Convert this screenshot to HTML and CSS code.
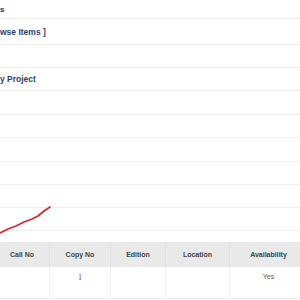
FILE: index.html
```html
<!DOCTYPE html>
<html>
<head>
<meta charset="utf-8">
<link rel="stylesheet" href="styles.css">
</head>
<body>
<div class="page">
  <div class="row r1"><span class="title">s</span></div>
  <div class="row r2"><span class="link">wse Items ]</span></div>
  <div class="row r3"></div>
  <div class="row r4"><span class="link">y Project</span></div>
  <div class="chart">
    <svg width="300" height="150" viewBox="0 0 300 150">
      <g stroke="#efefef" stroke-width="1">
        <line x1="0" y1="23.5" x2="300" y2="23.5"/>
        <line x1="0" y1="46.5" x2="300" y2="46.5"/>
        <line x1="0" y1="70.5" x2="300" y2="70.5"/>
        <line x1="0" y1="93.5" x2="300" y2="93.5"/>
        <line x1="0" y1="116.5" x2="300" y2="116.5"/>
        <line x1="0" y1="139.5" x2="300" y2="139.5"/>
      </g>
      <polyline points="0,142 8,138 16,135 24,131 32,128 38,125 44,120 50,116" fill="none" stroke="#d42a2a" stroke-width="1.8" stroke-linejoin="round" stroke-linecap="round"/>
    </svg>
  </div>
  <table class="items">
    <colgroup>
      <col class="c1"><col class="c2"><col class="c3"><col class="c4"><col class="c5">
    </colgroup>
    <thead>
      <tr><th>Call No</th><th>Copy No</th><th>Edition</th><th>Location</th><th>Availability</th></tr>
    </thead>
    <tbody>
      <tr><td></td><td class="num">1</td><td></td><td></td><td>Yes</td></tr>
    </tbody>
  </table>
</div>
</body>
</html>
```

FILE: styles.css
```css
html, body {
  margin: 0;
  padding: 0;
  background: #ffffff;
  overflow: hidden;
}
.page {
  width: 300px;
  height: 300px;
  overflow: hidden;
  font-family: "Liberation Sans", Arial, sans-serif;
}
.row {
  display: flex;
  align-items: center;
  border-bottom: 1px solid #eeeeee;
}
.r1 { height: 18px; }
.r2 { height: 25px; }
.r3 { height: 22px; }
.r4 { height: 22px; }
.title {
  font-weight: bold;
  font-size: 8px;
  color: #333333;
}
.link {
  font-weight: bold;
  font-size: 8.5px;
  color: #2f3d6c;
}
.chart {
  height: 150px;
}
.chart svg {
  display: block;
}
.items {
  border-collapse: collapse;
  table-layout: fixed;
  width: 313px;
  margin-left: -6px;
  margin-top: 1px;
}
.c1 { width: 55px; }
.c2 { width: 61px; }
.c3 { width: 55px; }
.c4 { width: 64px; }
.c5 { width: 78px; }
.items th {
  background: #e9e9e9;
  height: 25px;
  padding: 0;
  font-size: 7px;
  font-weight: bold;
  color: #444444;
  text-align: center;
  border-left: 1px solid #dedede;
  border-right: 1px solid #dedede;
}
.items td {
  height: 31px;
  padding: 6px 0 0 0;
  vertical-align: top;
  font-size: 7px;
  color: #555555;
  text-align: center;
  border: 1px solid #efefef;
  border-top: none;
  box-sizing: border-box;
}
.items td.num {
  font-family: "Liberation Serif", "Times New Roman", serif;
  font-size: 8px;
}
```
